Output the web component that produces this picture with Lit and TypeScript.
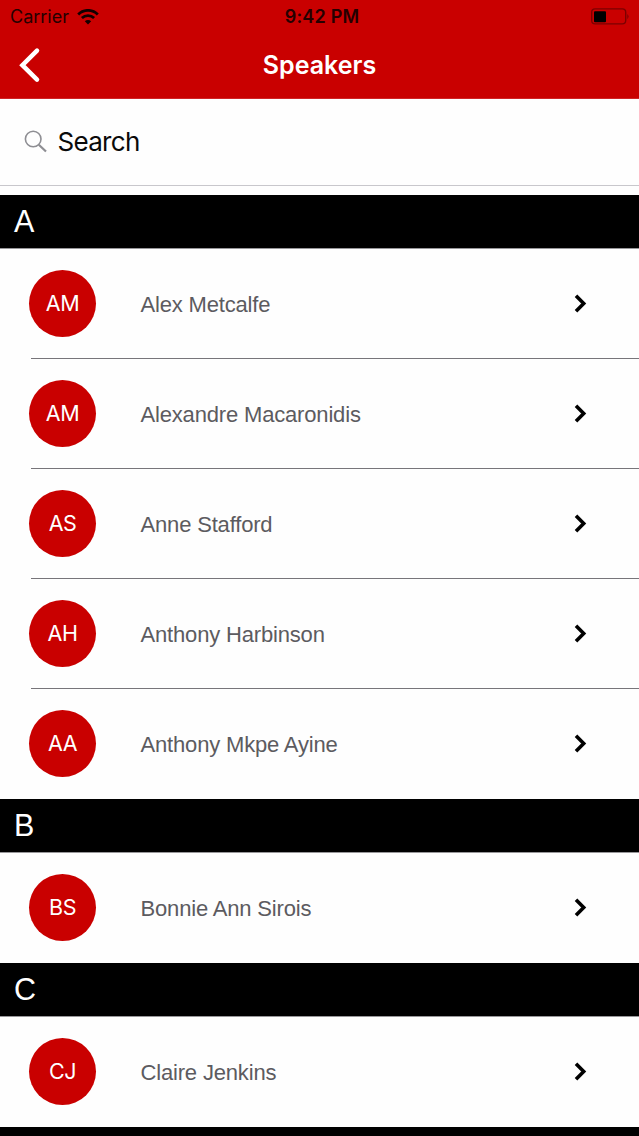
import { LitElement, html, css } from "lit";
import { customElement, property } from "lit/decorators.js";

interface Speaker { initials: string; name: string; }
interface Section { letter: string; speakers: Speaker[]; }

const SECTIONS: Section[] = [
  {
    letter: "A",
    speakers: [
      { initials: "AM", name: "Alex Metcalfe" },
      { initials: "AM", name: "Alexandre Macaronidis" },
      { initials: "AS", name: "Anne Stafford" },
      { initials: "AH", name: "Anthony Harbinson" },
      { initials: "AA", name: "Anthony Mkpe Ayine" },
    ],
  },
  { letter: "B", speakers: [{ initials: "BS", name: "Bonnie Ann Sirois" }] },
  { letter: "C", speakers: [{ initials: "CJ", name: "Claire Jenkins" }] },
  { letter: "", speakers: [] },
];

@customElement("status-bar")
class StatusBar extends LitElement {
  static styles = css`
    :host {
      display: grid;
      grid-template-columns: 1fr auto 1fr;
      align-items: center;
      height: 32px;
      padding: 0 10px 0 10px;
      box-sizing: border-box;
      color: #250000;
      font: 400 18px/32px Inter, sans-serif;
    }
    .left { display: flex; align-items: center; gap: 8px; }
    .left span { padding-top: 1px; }
    .time { font-weight: 600; font-size: 18px; letter-spacing: 0.2px; padding: 1px 0 0 5px; }
    .right { display: flex; justify-content: flex-end; }
    svg { display: block; }
  `;
  render() {
    return html`
      <div class="left">
        <span>Carrier</span>
        <svg width="22" height="16" viewBox="0 0 22 16" fill="none" stroke="#120000" stroke-width="2.8">
          <path d="M1.2 5.4a13.9 13.9 0 0 1 19.6 0" />
          <path d="M4.9 9.1a8.7 8.7 0 0 1 12.2 0" />
          <path d="M11 15.6l-3.2-3.3a4.6 4.6 0 0 1 6.4 0z" fill="#120000" stroke="none" />
        </svg>
      </div>
      <span class="time">9:42 PM</span>
      <div class="right">
        <svg width="40" height="18" viewBox="0 0 40 18">
          <rect x="2.7" y="0.9" width="34" height="15" rx="3.4" fill="none" stroke="#7c0000" stroke-width="1.4" />
          <rect x="5" y="3.2" width="12" height="11" rx="1" fill="#000" />
          <path d="M38.3 6q2.6 2.6 0 5.2z" fill="#7c0000" />
        </svg>
      </div>
    `;
  }
}

@customElement("speaker-row")
class SpeakerRow extends LitElement {
  @property() initials = "";
  @property() name = "";
  static styles = css`
    :host { display: block; height: 110px; padding-left: 31px; box-sizing: border-box; }
    .row {
      display: flex;
      align-items: center;
      height: 110px;
      box-sizing: border-box;
      border-bottom: 1px solid #77757a;
      padding-right: 52px;
    }
    :host([last]) .row { border-bottom-color: transparent; }
    .avatar {
      flex: none;
      width: 67px;
      height: 67px;
      margin-left: -2px;
      border-radius: 50%;
      background: #c90000;
      color: #fff;
      text-align: center;
      font: 400 21.5px/67px Inter, sans-serif;
      letter-spacing: -0.5px;
    }
    .name {
      flex: 1;
      margin-left: 44.5px;
      padding-top: 2px;
      color: #5c5b60;
      font: 400 22px/30px "Liberation Sans", Arial, sans-serif;
      letter-spacing: -0.17px;
      white-space: nowrap;
    }
    svg { display: block; flex: none; }
  `;
  render() {
    return html`
      <div class="row">
        <div class="avatar">${this.initials}</div>
        <div class="name">${this.name}</div>
        <svg width="14" height="20" viewBox="0 0 14 20">
          <path d="M3 1.8l7.7 7.7L3 17.2" fill="none" stroke="#000" stroke-width="3.6" />
        </svg>
      </div>
    `;
  }
}

@customElement("app-root")
class AppRoot extends LitElement {
  static styles = css`
    :host { display: block; height: 1136px; overflow: hidden; background: #fefefe; }
    .top { background: #c90000; height: 98px; border-bottom: 1px solid #cf2426; }
    .nav {
      display: grid;
      grid-template-columns: 60px 1fr 60px;
      align-items: center;
      height: 66px;
    }
    .back { display: block; margin-left: 18px; }
    .title {
      text-align: center;
      color: #fff;
      font: 600 25px/32px Inter, sans-serif;
    }
    .search {
      display: flex;
      align-items: center;
      height: 86px;
      padding-left: 24px;
      border-bottom: 1px solid #c8c7cc;
      margin-bottom: 9px;
      color: #0a0a0a;
      font: 400 26px/32px Inter, sans-serif;
      letter-spacing: -0.7px;
    }
    .search span { padding-bottom: 1px; }
    .glass { display: block; margin-right: 9.5px; }
    .letter {
      height: 53px;
      padding-left: 14px;
      background: #000;
      border-bottom: 1px solid #98979a;
      color: #fff;
      font: 400 30.5px/53px "Liberation Sans", Arial, sans-serif;
    }
  `;
  render() {
    return html`
      <header class="top">
        <status-bar></status-bar>
        <div class="nav">
          <svg class="back" width="24" height="36" viewBox="0 0 24 36">
            <path d="M19 3.7L4.4 18.2 19 32.7" fill="none" stroke="#fff" stroke-width="4.5" stroke-linecap="round" />
          </svg>
          <div class="title">Speakers</div>
        </div>
      </header>
      <div class="search">
        <svg class="glass" width="24" height="24" viewBox="0 0 24 24" fill="none" stroke="#8e8e93">
          <circle cx="9.2" cy="9" r="7.8" stroke-width="1.6" />
          <path d="M14.8 14.7l7.2 6.8" stroke-width="2.2" />
        </svg>
        <span>Search</span>
      </div>
      ${SECTIONS.map(
        (s) => html`
          <div class="letter">${s.letter}</div>
          ${s.speakers.map(
            (p, i) => html`<speaker-row
              .initials=${p.initials}
              .name=${p.name}
              ?last=${i === s.speakers.length - 1}
            ></speaker-row>`
          )}
        `
      )}
    `;
  }
}
